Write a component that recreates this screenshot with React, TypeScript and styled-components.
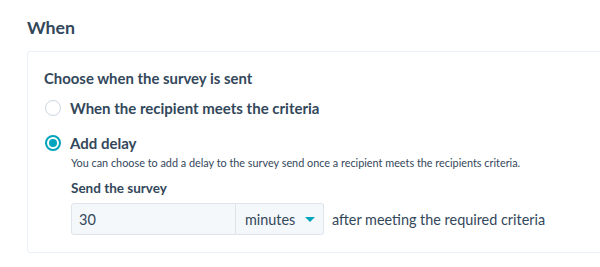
import React from "react";
import styled, { createGlobalStyle } from "styled-components";

const Global = createGlobalStyle`
  html, body { margin: 0; padding: 0; background: #fff; }
  body { font-family: Lato, "Noto Sans", sans-serif; color: #33475b; }
`;

const Page = styled.div`
  padding: 16px 0 0 27px;
  width: 600px;
  box-sizing: border-box;
  overflow: hidden;
`;

const Heading = styled.h2`
  margin: 0 0 13px;
  font-size: 17.8px;
  line-height: 22px;
  font-weight: 700;
  color: #33475b;
`;

const Card = styled.div`
  width: 620px;
  box-sizing: border-box;
  border: 1px solid #eaf0f6;
  border-radius: 3px;
  padding: 16px 0 17px 16px;
`;

const Legend = styled.div`
  font-size: 14.9px;
  font-weight: 700;
  line-height: 20px;
  margin-bottom: 9px;
`;

const Option = styled.label<{ $gap?: number }>`
  display: flex;
  align-items: center;
  gap: 9px;
  height: 22px;
  margin-left: 1px;
  margin-bottom: ${(p) => p.$gap ?? 0}px;
`;

const Radio = styled.span<{ $checked?: boolean }>`
  width: 16px;
  height: 16px;
  box-sizing: border-box;
  border-radius: 50%;
  border: ${(p) => (p.$checked ? "2px solid #00a4bd" : "1px solid #cbd6e2")};
  display: flex;
  align-items: center;
  justify-content: center;
  flex: none;
  &::after {
    content: "";
    display: ${(p) => (p.$checked ? "block" : "none")};
    width: 8px;
    height: 8px;
    border-radius: 50%;
    background: #00a4bd;
  }
`;

const OptionText = styled.span`
  font-size: 15px;
  font-weight: 700;
`;

const Sub = styled.div`
  padding-left: 27px;
`;

const Help = styled.div`
  font-size: 10.85px;
  line-height: 16px;
  margin-top: 1px;
  color: #33475b;
`;

const FieldLabel = styled.div`
  font-size: 13.5px;
  font-weight: 700;
  line-height: 18px;
  margin-top: 8px;
  margin-bottom: 6px;
`;

const Row = styled.div`
  display: flex;
  align-items: center;
`;

const Input = styled.div`
  width: 165px;
  height: 32px;
  box-sizing: border-box;
  background: #f5f8fa;
  border: 1px solid #dfe3eb;
  border-radius: 3px 0 0 3px;
  display: flex;
  align-items: center;
  padding-left: 7px;
  font-size: 14.5px;
`;

const Select = styled.div`
  width: 88px;
  height: 32px;
  box-sizing: border-box;
  background: #f5f8fa;
  border: 1px solid #dfe3eb;
  border-left: none;
  border-radius: 0 3px 3px 0;
  display: flex;
  align-items: center;
  padding-left: 9px;
  gap: 10px;
  font-size: 14.4px;
`;

const Caret = styled.span`
  width: 0;
  height: 0;
  border-left: 5px solid transparent;
  border-right: 5px solid transparent;
  border-top: 5px solid #00a4bd;
`;

const After = styled.span`
  margin-left: 8px;
  font-size: 14.4px;
`;

export default function App() {
  return (
    <>
      <Global />
      <Page>
        <Heading>When</Heading>
        <Card>
          <Legend>Choose when the survey is sent</Legend>
          <Option $gap={13}>
            <Radio />
            <OptionText>When the recipient meets the criteria</OptionText>
          </Option>
          <Option>
            <Radio $checked />
            <OptionText>Add delay</OptionText>
          </Option>
          <Sub>
            <Help>You can choose to add a delay to the survey send once a recipient meets the recipients criteria.</Help>
            <FieldLabel>Send the survey</FieldLabel>
            <Row>
              <Input>30</Input>
              <Select>
                minutes
                <Caret />
              </Select>
              <After>after meeting the required criteria</After>
            </Row>
          </Sub>
        </Card>
      </Page>
    </>
  );
}
